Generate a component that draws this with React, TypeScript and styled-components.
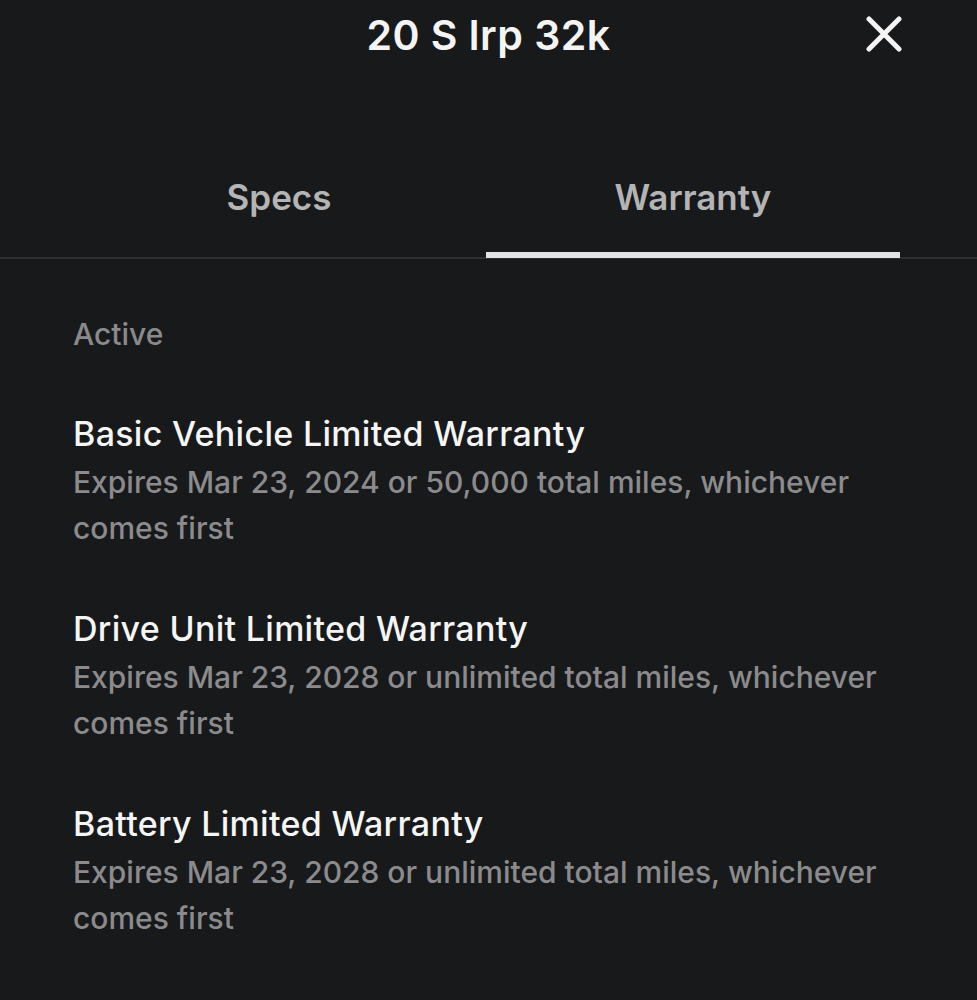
import React from "react";
import styled, { createGlobalStyle } from "styled-components";

const Global = createGlobalStyle`
  html, body { margin: 0; padding: 0; background: #18191b; }
  body { font-family: Inter, "Noto Sans", sans-serif; -webkit-font-smoothing: antialiased; }
`;

const Page = styled.div`
  width: 977px;
  height: 1000px;
  background: #18191b;
  overflow: hidden;
  display: flex;
  flex-direction: column;
`;

const Header = styled.header`
  position: relative;
  height: 70px;
  display: flex;
  align-items: center;
  justify-content: center;
`;

const Title = styled.h1`
  margin: 0;
  font-size: 41px;
  font-weight: 600;
  color: #f4f4f4;
  letter-spacing: 0.5px;
`;

const Close = styled.button`
  position: absolute;
  right: 73px;
  top: 14px;
  width: 40px;
  height: 40px;
  padding: 0;
  border: 0;
  background: transparent;
  display: flex;
  align-items: center;
  justify-content: center;
`;

const TabBar = styled.nav`
  margin-top: 90px;
  border-bottom: 2px solid #2e2f31;
  display: flex;
  padding: 0 77px 0 72px;
`;

const Tab = styled.div<{ $active?: boolean }>`
  flex: 1;
  height: 98px;
  display: flex;
  align-items: flex-start;
  justify-content: center;
  padding-top: 16px;
  box-sizing: border-box;
  font-size: 35px;
  font-weight: 600;
  color: #b4b4b4;
  border-bottom: 6px solid ${(p) => (p.$active ? "#e3e3e3" : "transparent")};
  margin-bottom: -1px;
`;

const Content = styled.main`
  padding: 58px 77px 0 73px;
  display: flex;
  flex-direction: column;
`;

const SectionLabel = styled.div`
  font-size: 30px;
  font-weight: 500;
  color: #8a8a8c;
  line-height: 34px;
  margin-bottom: 63px;
`;

const Item = styled.section`
  margin-bottom: 58px;
`;

const ItemTitle = styled.div`
  font-size: 34px;
  font-weight: 500;
  color: #f5f5f5;
  line-height: 40px;
  letter-spacing: 0.3px;
  margin-bottom: 5px;
`;

const ItemText = styled.div`
  font-size: 30px;
  font-weight: 500;
  color: #8b8b8d;
  line-height: 46px;
`;

const items = [
  {
    title: "Basic Vehicle Limited Warranty",
    text: "Expires Mar 23, 2024 or 50,000 total miles, whichever comes first",
  },
  {
    title: "Drive Unit Limited Warranty",
    text: "Expires Mar 23, 2028 or unlimited total miles, whichever comes first",
  },
  {
    title: "Battery Limited Warranty",
    text: "Expires Mar 23, 2028 or unlimited total miles, whichever comes first",
  },
];

export default function App() {
  return (
    <Page>
      <Global />
      <Header>
        <Title>20 S lrp 32k</Title>
        <Close aria-label="Close">
          <svg width="36" height="36" viewBox="0 0 36 36">
            <path
              d="M3 3 L33 33 M33 3 L3 33"
              stroke="#f5f5f5"
              strokeWidth="5"
              strokeLinecap="round"
            />
          </svg>
        </Close>
      </Header>
      <TabBar>
        <Tab>Specs</Tab>
        <Tab $active>Warranty</Tab>
      </TabBar>
      <Content>
        <SectionLabel>Active</SectionLabel>
        {items.map((it) => (
          <Item key={it.title}>
            <ItemTitle>{it.title}</ItemTitle>
            <ItemText>{it.text}</ItemText>
          </Item>
        ))}
      </Content>
    </Page>
  );
}
